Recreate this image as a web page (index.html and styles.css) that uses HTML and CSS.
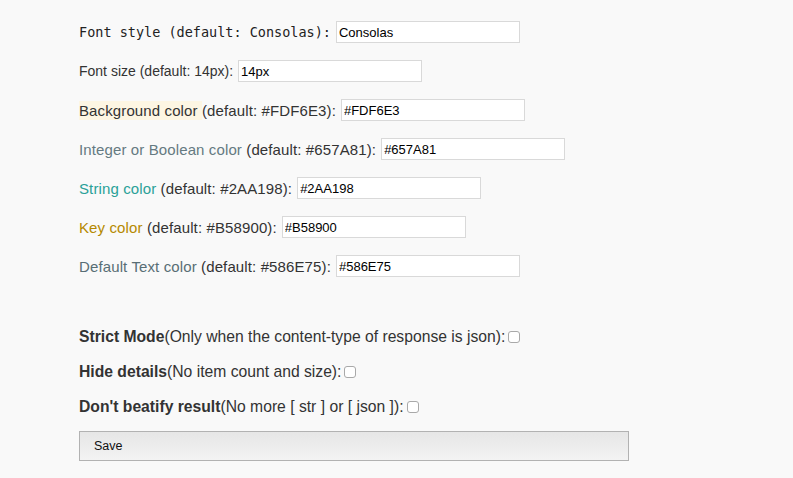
FILE: index.html
```html
<!DOCTYPE html>
<html>
<head>
<meta charset="utf-8">
<link rel="stylesheet" href="styles.css">
</head>
<body>
<div class="page">
  <div class="row"><label class="mono">Font style (default: Consolas):</label><input class="field" type="text" value="Consolas"></div>
  <div class="row"><label class="small">Font size (default: 14px):</label><input class="field" type="text" value="14px"></div>
  <div class="row"><label class="wide"><span class="bg-sample">Background color </span>(default: #FDF6E3):</label><input class="field" type="text" value="#FDF6E3"></div>
  <div class="row"><label class="wide"><span class="c-int">Integer or Boolean color</span> (default: #657A81):</label><input class="field" type="text" value="#657A81"></div>
  <div class="row"><label class="wide"><span class="c-str">String color</span> (default: #2AA198):</label><input class="field" type="text" value="#2AA198"></div>
  <div class="row"><label class="wide"><span class="c-key">Key color</span> (default: #B58900):</label><input class="field" type="text" value="#B58900"></div>
  <div class="row"><label class="wide"><span class="c-def">Default Text color</span> (default: #586E75):</label><input class="field" type="text" value="#586E75"></div>

  <div class="checks">
    <div class="check-row"><label><b>Strict Mode</b>(Only when the content-type of response is json):</label><span class="box"></span></div>
    <div class="check-row"><label><b>Hide details</b>(No item count and size):</label><span class="box"></span></div>
    <div class="check-row"><label><b>Don't beatify result</b>(No more [ str ] or [ json ]):</label><span class="box"></span></div>
  </div>

  <button class="save">Save</button>
</div>
</body>
</html>
```

FILE: styles.css
```css
html, body {
  margin: 0;
  padding: 0;
  background: #f9f9f9;
}
body {
  font-family: "Liberation Sans", Arial, sans-serif;
  font-size: 15px;
  color: #333;
}
.page {
  padding: 21px 0 0 79px;
}
.row {
  display: flex;
  align-items: center;
  height: 22px;
  margin-bottom: 17px;
}
.row label {
  white-space: nowrap;
}
.mono {
  font-family: "DejaVu Sans Mono", monospace;
  font-size: 13.5px;
  color: #222;
}
.small {
  font-size: 14px;
}
.wide {
  letter-spacing: 0.12px;
}
.field {
  box-sizing: border-box;
  width: 184px;
  height: 22px;
  margin: 0 0 0 5px;
  padding: 0 2px;
  border: 1px solid #d9d9d9;
  background: #fff;
  font-family: "Liberation Sans", Arial, sans-serif;
  font-size: 13px;
  color: #000;
  outline: none;
}
.bg-sample {
  background: #FDF6E3;
  padding: 1px 0;
}
.c-int { color: #657A81; }
.c-str { color: #2AA198; }
.c-key { color: #B58900; }
.c-def { color: #586E75; }
.checks {
  margin-top: 49px;
}
.check-row {
  display: flex;
  align-items: center;
  height: 22px;
  margin-bottom: 13px;
  font-size: 15.7px;
  white-space: nowrap;
}
.check-row b {
  font-weight: bold;
}
.box {
  display: inline-block;
  box-sizing: border-box;
  width: 12px;
  height: 12px;
  margin-left: 3px;
  border: 1px solid #a9a9a9;
  border-radius: 3px;
  background: #fff;
}
.save {
  display: block;
  box-sizing: border-box;
  width: 550px;
  height: 30px;
  margin-top: 1px;
  padding: 0 0 0 14px;
  text-align: left;
  border: 1px solid #b2b2b2;
  background: linear-gradient(#e6e6e6, #f3f3f3);
  font-family: "Liberation Sans", Arial, sans-serif;
  font-size: 12.5px;
  color: #111;
}
```
